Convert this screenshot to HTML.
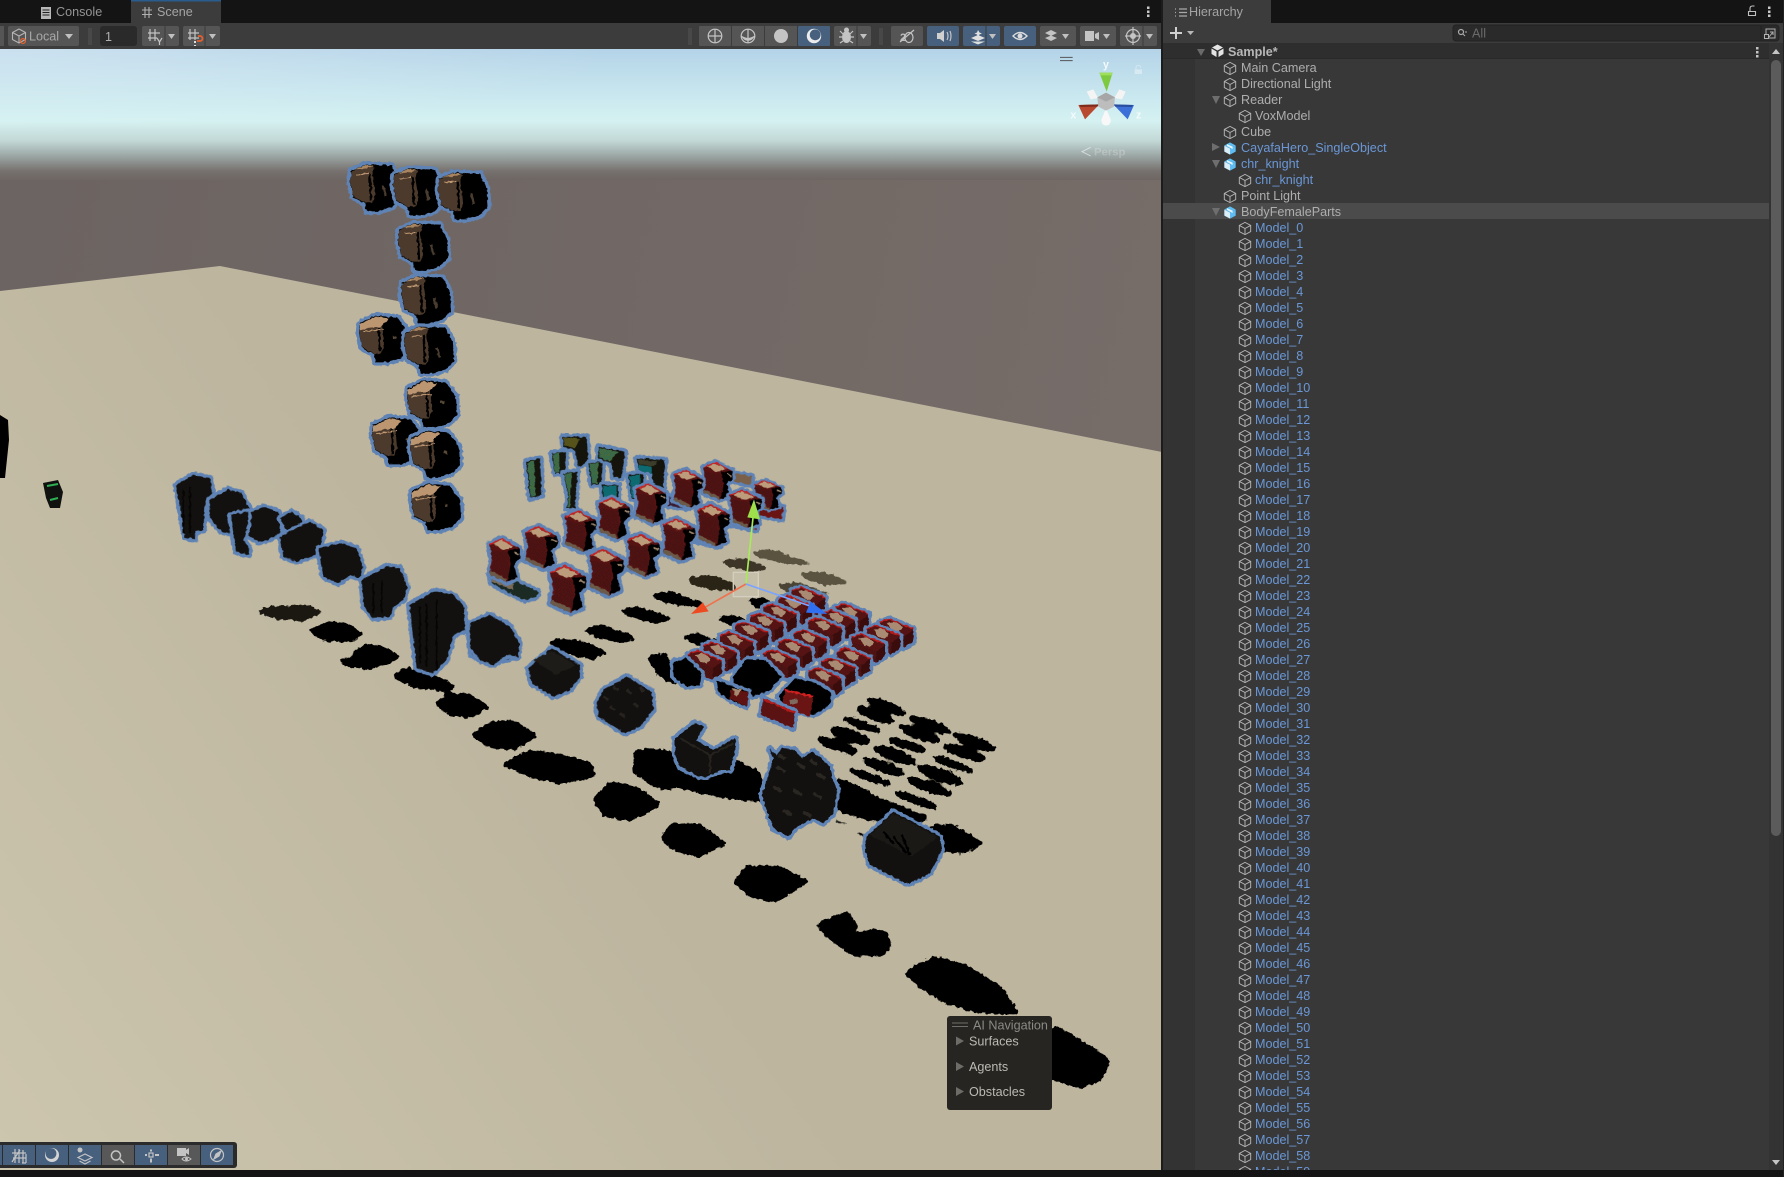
<!DOCTYPE html>
<html><head><meta charset="utf-8"><title>Scene</title>
<style>
html,body{margin:0;padding:0;background:#141414;}
#w{position:relative;width:1784px;height:1177px;overflow:hidden;background:#141414;font-family:"Liberation Sans",sans-serif;}
svg#s{position:absolute;left:0;top:0;}
svg text{font-family:"Liberation Sans",sans-serif;}
#h{position:absolute;left:1163px;top:59px;width:606px;height:1111px;overflow:hidden;font-size:12.6px;color:#aeaeae;background:linear-gradient(90deg,#333 0,#333 32px,#383838 32px);}
#h div{height:16px;line-height:18px;white-space:nowrap;position:relative;}
#h svg{position:absolute;top:2px;width:14px;height:15px;}
.a{padding-left:78px}.a svg{left:60px}
.b{padding-left:92px}.b svg{left:75px}
.m{color:#6b97d6}
.sel{background:#4b4b4b}
.tri{position:absolute;left:49px;top:5px;width:0;height:0;}
.dn{border-left:4.5px solid transparent;border-right:4.5px solid transparent;border-top:8px solid #6e6e6e;}
.rt{border-top:4.5px solid transparent;border-bottom:4.5px solid transparent;border-left:8px solid #6e6e6e;top:4px;}
.o{fill:#13110f;stroke:#5f83b5;stroke-width:20;stroke-linejoin:round;paint-order:stroke;}
.t{fill:#14140c;stroke:#5f83b5;stroke-width:20;stroke-linejoin:round;paint-order:stroke;}
.bk{fill:#000}
.ic{fill:none;stroke:#c4c4c4;stroke-width:1.2}
.if{fill:#c4c4c4}
</style></head><body><div id="w">
<svg id="s" width="1784" height="1177" viewBox="0 0 1784 1177" xmlns="http://www.w3.org/2000/svg">
<defs>
<linearGradient id="sky" x1="0" y1="49" x2="0" y2="180" gradientUnits="userSpaceOnUse">
<stop offset="0" stop-color="#b4d3e8"/><stop offset=".42" stop-color="#cdebf0"/><stop offset=".55" stop-color="#d5f1f1"/><stop offset=".7" stop-color="#c2d8d6"/><stop offset=".82" stop-color="#9aa5a3"/><stop offset=".93" stop-color="#77726f"/><stop offset="1" stop-color="#6e6663"/>
</linearGradient>
<radialGradient id="sk2" cx="0" cy="0" r="1" gradientUnits="userSpaceOnUse" gradientTransform="translate(0,49) scale(620,85)"><stop offset="0" stop-color="#fff" stop-opacity=".3"/><stop offset="1" stop-color="#fff" stop-opacity="0"/></radialGradient>
<linearGradient id="gr" x1="0" y1="200" x2="1162" y2="460" gradientUnits="userSpaceOnUse"><stop offset="0" stop-color="#6c6462"/><stop offset="1" stop-color="#766c68"/></linearGradient>
<linearGradient id="pl" x1="0" y1="1170" x2="560" y2="760" gradientUnits="userSpaceOnUse"><stop offset="0" stop-color="#cdc6ae"/><stop offset="1" stop-color="#bdb59e"/></linearGradient>
<pattern id="chk" width="6" height="6" patternUnits="userSpaceOnUse"><rect width="6" height="6" fill="#0d6a70"/><rect width="3" height="3" fill="#6e6a1c"/><rect x="3" y="3" width="3" height="3" fill="#6e6a1c"/></pattern>
<pattern id="rchk" width="8" height="8" patternUnits="userSpaceOnUse"><rect width="8" height="8" fill="#5a1212"/><rect width="4" height="4" fill="#3f1414"/><rect x="4" y="4" width="4" height="4" fill="#3f1414"/></pattern>
<filter id="blob" filterUnits="userSpaceOnUse" x="0" y="49" width="1162" height="1121" color-interpolation-filters="sRGB">
<feGaussianBlur stdDeviation="2.2" result="b"/>
<feComponentTransfer in="b" result="t"><feFuncA type="linear" slope="9" intercept="-3.6"/></feComponentTransfer>
<feTurbulence type="fractalNoise" baseFrequency=".22" numOctaves="2" seed="4" result="n"/>
<feDisplacementMap in="t" in2="n" scale="5" xChannelSelector="R" yChannelSelector="G"/>
</filter>
<filter id="jag" filterUnits="userSpaceOnUse" x="0" y="49" width="1162" height="1121" color-interpolation-filters="sRGB">
<feTurbulence type="fractalNoise" baseFrequency=".3" numOctaves="1" seed="7" result="n"/>
<feDisplacementMap in="SourceGraphic" in2="n" scale="3.5" xChannelSelector="R" yChannelSelector="G"/>
</filter>
<g id="h1" transform="scale(.3333)">
<polygon class="o" style="fill:#000" points="-72,-52 -30,-70 50,-67 72,-22 75,33 50,58 10,70 -25,70 -30,46 -65,28 -75,-17"/>
<polygon fill="#4c3a2c" points="-72,-50 -30,-66 -2,-64 -8,-40 2,20 -8,44 -30,44 -65,26 -74,-17"/>
<polygon fill="#a8845f" points="-62,-56 -30,-69 -4,-66 -30,-58"/>
<path d="M-16,-44 L-12,38M-2,-46 L4,26" stroke="#000" stroke-width="7" fill="none"/>
<path d="M-55,-40 L-20,-44" stroke="#c29a74" stroke-width="3"/>
<path d="M24,-8 L32,24" stroke="#4a3d30" stroke-width="8"/>
</g>
<g id="h2" transform="scale(.3333)">
<polygon class="o" style="fill:#000" points="-72,-48 -25,-70 40,-65 72,-22 75,33 50,58 10,70 -25,70 -30,46 -65,28 -75,-17"/>
<polygon fill="#4c3a2c" points="-74,-30 -5,-42 0,20 -8,44 -30,44 -65,26 -74,-17"/>
<polygon fill="#bc9670" points="-72,-44 -25,-68 15,-62 -2,-45 -10,-36 -35,-36 -72,-26"/>
<path d="M-16,-34 L-12,38" stroke="#000" stroke-width="7" fill="none"/>
<path d="M-62,-22 L0,-30" stroke="#c29a74" stroke-width="3"/>
<path d="M26,-6 L36,-4" stroke="#5a4a38" stroke-width="8"/>
</g>
<g id="r">
<polygon class="o" style="fill:#571212" points="-50,-45 -10,-62 47,-32 47,-5 28,10 38,50 5,64 -50,40 -42,0"/>
<polygon fill="url(#rchk)" points="-48,-30 8,-22 16,54 -44,30 -36,0"/>
<polygon fill="#000" points="10,-28 47,-32 47,-5 28,10 38,50 8,62 18,10"/>
<polygon fill="#bd9c7c" points="-38,-46 -10,-58 25,-38 -5,-28"/>
<path d="M-48,-44 L-10,-61 L28,-40" stroke="#d02020" stroke-width="4" fill="none"/>
<polygon fill="#6b5a48" points="-50,40 5,64 5,54 -46,30"/>
<path d="M30,-22 L44,-16" stroke="#a08870" stroke-width="5"/>
</g>
<g id="v">
<polygon class="o" style="fill:#561313" points="-50,-28 -22,-38 50,-8 50,30 22,48 -50,20"/>
<polygon fill="url(#rchk)" points="-48,-14 24,14 24,46 -48,18"/>
<polygon fill="#a88b72" points="-30,-26 -5,-30 18,-14 6,0 -12,-4"/>
<path d="M-50,-28 L-22,-38 L50,-8" stroke="#b81c1c" stroke-width="4" fill="none"/>
<polygon fill="#3a0c0c" points="24,14 50,-4 50,30 24,46"/>
</g>
<g id="c"><path fill="none" stroke="#b4b4b4" stroke-width="1.1" d="M8 1 L14.5 4.5 V11.5 L8 15 L1.5 11.5 V4.5 Z M1.5 4.5 L8 8 L14.5 4.5 M8 8 V15"/></g>
<g id="p"><path fill="#d9eefa" d="M1.5 4.5 L8 8 V15 L1.5 11.5 Z"/><path fill="#5fbdf2" d="M8 8 L14.5 4.5 V11.5 L8 15 Z"/><path fill="#5fbdf2" d="M8 1 L14.5 4.5 L8 8 L1.5 4.5 Z"/><path fill="#e8f4fb" d="M4.5 3 L11 6 L11 8.5 L4.5 5 Z"/></g>
</defs>

<!-- scene -->
<rect x="0" y="49" width="1162" height="1121" fill="url(#gr)"/>
<rect x="0" y="49" width="1162" height="131" fill="url(#sky)"/>
<rect x="0" y="49" width="1162" height="90" fill="url(#sk2)"/>
<polygon points="0,291 220,266 1162,452 1162,1170 0,1170" fill="url(#pl)"/>

<!-- far shadows -->
<g filter="url(#blob)">
<g class="bk" transform="translate(160,460) scale(.3333)">
<polygon fill="#1a1810" points="282,452 350,436 440,436 492,455 430,484 350,478"/>
<polygon points="443,510 510,483 570,493 612,525 570,547 490,542"/>
<polygon points="530,600 585,590 575,575 625,550 680,563 724,590 690,612 630,627 560,620"/>
<polygon points="695,650 740,620 800,638 850,658 894,680 860,694 760,684"/>
<polygon points="824,735 860,698 930,703 992,742 930,774 870,767"/>
</g>
<g class="bk">
<polygon points="471,735 490,722 515,720 538,736 515,750 490,748"/>
<polygon points="500,765 530,750 560,754 592,763 596,777 560,784 530,777"/>
<polygon points="592,800 610,781 640,788 662,805 630,821 605,817"/>
<polygon points="815,924 848,911 858,927 850,933 865,931 884,929 892,944 884,956 853,956 829,939"/>
<polygon points="903,973 933,956 967,965 1003,988 1020,1015 978,1013 944,1003 920,988"/>
<polygon points="1017,1050 1030,1035 1057,1026 1097,1050 1110,1060 1102,1080 1080,1089 1050,1079"/>
</g>
<g class="bk" transform="translate(470,420) scale(.3333)">
<polygon points="230,670 270,654 350,666 414,700 370,719 300,704"/>
<polygon points="333,628 400,614 507,655 460,669 380,654"/>
<polygon points="447,570 500,558 614,595 560,612 480,590"/>
<polygon points="537,525 600,514 717,555 660,562 570,545"/>
<polygon fill="#2a2416" points="645,475 720,464 792,490 802,512 720,509 670,495"/>
<polygon fill="#3d3527" points="745,425 820,414 902,445 850,456 780,440"/>
<polygon fill="#5a5340" points="835,395 900,388 1042,435 960,434 870,412"/>
<polygon fill="#4a4434" points="915,495 980,486 1087,525 1010,534 950,515"/>
<polygon fill="#5a5340" points="980,460 1050,454 1147,488 1070,496 1010,478"/>
<polygon points="530,710 590,696 627,800 570,774"/>
<polygon points="632,650 680,638 762,670 700,682"/>
<polygon points="735,595 790,584 862,610 800,624"/>
<polygon points="830,540 880,531 922,560 860,566"/>
</g>
<g class="bk" transform="translate(600,680) scale(.3333)">
<polygon points="105,210 160,205 220,215 225,260 330,290 410,240 480,275 490,365 410,360 350,350 240,325 180,330 100,280"/>
<polygon points="0,340 40,310 120,328 182,375 100,417 20,387"/>
<polygon points="180,475 215,430 300,433 382,490 300,532 220,512"/>
<polygon points="398,605 440,558 540,558 630,605 530,667 450,652"/>
<polygon points="710,290 800,330 830,350 987,410 960,432 860,412 830,427 730,402 700,382"/>
<polygon points="988,435 1060,433 1152,490 1090,522 1020,512"/>
<polygon points="700,418 752,430 745,436 700,428"/>
<polygon points="752,445 800,465 790,474"/>
<g>
<ellipse cx="858" cy="80" rx="66" ry="16" transform="rotate(20 858 80)"/>
<ellipse cx="825" cy="105" rx="64" ry="15" transform="rotate(20 825 105)"/>
<ellipse cx="787" cy="135" rx="64" ry="12" transform="rotate(20 787 135)"/>
<ellipse cx="750" cy="167" rx="66" ry="18" transform="rotate(18 750 167)"/>
<ellipse cx="712" cy="197" rx="66" ry="16" transform="rotate(20 712 197)"/>
<ellipse cx="990" cy="134" rx="68" ry="16" transform="rotate(20 990 134)"/>
<ellipse cx="958" cy="162" rx="68" ry="17" transform="rotate(20 958 162)"/>
<ellipse cx="922" cy="195" rx="66" ry="12" transform="rotate(18 922 195)"/>
<ellipse cx="885" cy="226" rx="70" ry="18" transform="rotate(20 885 226)"/>
<ellipse cx="850" cy="260" rx="70" ry="16" transform="rotate(20 850 260)"/>
<ellipse cx="810" cy="292" rx="70" ry="12" transform="rotate(20 810 292)"/>
<ellipse cx="1123" cy="186" rx="70" ry="17" transform="rotate(20 1123 186)"/>
<ellipse cx="1093" cy="218" rx="70" ry="16" transform="rotate(18 1093 218)"/>
<ellipse cx="1059" cy="253" rx="70" ry="12" transform="rotate(20 1059 253)"/>
<ellipse cx="1020" cy="285" rx="74" ry="19" transform="rotate(20 1020 285)"/>
<ellipse cx="988" cy="320" rx="74" ry="16" transform="rotate(20 988 320)"/>
<ellipse cx="948" cy="360" rx="72" ry="13" transform="rotate(20 948 360)"/>
</g>
</g>
</g>
<polygon class="bk" points="0,415 8,420 9,440 5,478 0,478"/>
<polygon fill="#101210" points="43,483 58,480 63,492 60,508 50,508 46,498"/>
<path d="M47,486 L58,484 M50,500 L58,498" stroke="#2fae55" stroke-width="2"/>

<g filter="url(#jag)">
<!-- heads -->
<use href="#h1" x="375" y="188"/><use href="#h1" x="418" y="192"/><use href="#h1" x="463" y="196"/>
<use href="#h1" x="423" y="247"/><use href="#h1" x="426" y="300"/>
<use href="#h2" x="384" y="339"/><use href="#h1" x="429" y="350"/>
<use href="#h2" x="432" y="404"/><use href="#h2" x="397" y="441"/><use href="#h2" x="435" y="454"/>
<use href="#h2" x="436" y="507"/>

<!-- dark row -->
<g transform="translate(160,460) scale(.3333)">
<polygon class="o" points="48,75 100,45 150,55 158,100 135,130 130,210 105,215 105,238 75,232"/>
<polygon class="o" points="148,120 205,88 245,100 270,150 245,160 212,170 215,220 185,215 150,175"/>
<polygon class="o" points="258,165 310,140 355,155 362,220 320,240 295,245 262,225"/>
<polygon class="o" points="212,165 265,155 262,200 250,240 268,265 265,285 228,275"/>
<polygon class="o" points="360,175 395,155 425,175 425,205 380,210"/>
<polygon class="o" points="360,230 420,200 450,185 490,210 485,245 465,285 435,295 410,305 370,290"/>
<polygon class="o" points="475,265 545,250 590,265 608,320 600,355 570,345 535,370 490,350"/>
<polygon class="o" points="605,360 680,318 720,325 742,380 730,420 700,440 690,470 640,475 612,440"/>
<polygon class="o" points="748,435 825,392 880,405 912,440 915,510 880,525 860,600 820,640 770,625"/>
<polygon class="o" points="925,505 985,465 1040,490 1075,545 1075,590 1030,600 990,612 935,585"/>
<path d="M780,440V610M800,430V620M830,420V630" stroke="#060504" stroke-width="5"/>
<path d="M640,370V460M665,360V460M70,90V220M90,80V220" stroke="#060504" stroke-width="5"/>
</g>

<!-- colored parts -->
<g transform="translate(470,420) scale(.3333)">
<polygon class="t" points="168,125 210,115 215,225 180,235 175,185"/><polygon fill="url(#chk)" points="172,128 192,122 196,228 182,232 178,185"/>
<polygon class="t" points="245,100 288,95 285,160 255,160"/><polygon fill="url(#chk)" points="248,102 268,98 268,158 256,158"/>
<polygon class="t" points="278,50 350,50 355,125 325,140 315,90 280,80"/><polygon fill="#55521c" points="280,52 330,56 315,84 282,76"/>
<polygon class="t" points="280,160 322,155 315,265 290,265 295,230"/><polygon fill="url(#chk)" points="282,162 305,158 300,262 292,262 297,230"/>
<polygon class="t" points="355,130 398,125 395,190 365,195"/><polygon fill="url(#chk)" points="358,132 385,128 382,190 367,192"/>
<polygon class="t" points="385,80 465,95 455,175 430,170 425,130 385,115"/><polygon fill="url(#chk)" points="388,84 445,96 420,125 388,112"/>
<polygon class="t" points="475,165 520,160 520,235 485,235"/><polygon fill="#0d6a70" points="478,168 510,163 510,232 486,232"/>
<polygon class="t" points="395,195 445,195 445,240 400,240"/><polygon fill="#0d6a70" points="398,198 440,197 440,238 402,238"/>
<polygon class="t" points="500,115 585,120 580,205 550,195 545,160 505,150"/><polygon fill="#3d3d2c" points="503,118 565,124 545,140 505,130"/><polygon fill="#0d6a70" points="505,132 545,142 545,160 505,150"/>

<polygon class="o" style="fill:#3a1c30" points="580,225 650,240 650,265 580,255"/>
<polygon class="o" style="fill:#7a6048" points="770,155 845,170 845,195 770,180"/>
<polygon class="o" style="fill:#5a1212" points="670,335 750,350 750,378 670,362"/>
<polygon class="o" style="fill:#8a1616" points="780,290 860,308 860,330 780,312"/>
<polygon class="o" style="fill:#6a1414" points="865,250 940,262 935,298 865,285"/>

<use href="#r" x="745" y="182" transform="translate(745,182) scale(.9) translate(-745,-182)"/>
<use href="#r" x="895" y="225" transform="translate(895,225) scale(.85,.7) translate(-895,-225)"/>
<use href="#r" x="655" y="205" transform="translate(655,205) scale(.9) translate(-655,-205)"/>
<use href="#r" x="828" y="266" transform="translate(828,266) scale(1,.9) translate(-828,-266)"/>
<use href="#r" x="544" y="250" transform="translate(544,250) scale(.95) translate(-544,-250)"/>
<use href="#r" x="434" y="294" transform="translate(434,294) scale(.98,.98) translate(-434,-294)"/>
<use href="#r" x="732" y="315"/>
<use href="#r" x="629" y="358"/>
<use href="#r" x="333" y="333" transform="translate(333,333) scale(.97,.98) translate(-333,-333)"/>
<use href="#r" x="522" y="405"/>
<use href="#r" x="215" y="381"/>
<use href="#r" x="411" y="456" transform="translate(411,456) scale(1.05,1.1) translate(-411,-456)"/>
<polygon class="o" style="fill:#1c2a24" points="60,450 120,470 150,490 205,515 200,530 165,540 120,520 65,490"/>
<polygon fill="#7b6a55" points="60,450 125,470 130,510 65,485"/>
<use href="#r" x="105" y="420" transform="translate(105,420) scale(.95,1.05) translate(-105,-420)"/>
<use href="#r" x="296" y="506" transform="translate(296,506) scale(1.1,1.12) translate(-296,-506)"/>

<polygon class="o" points="0,610 60,585 120,620 148,670 145,710 110,705 70,735 30,720 0,680"/>
<polygon class="o" points="175,745 245,685 330,735 330,770 300,810 250,830 185,790"/>
<polygon fill="#1e1c19" points="190,720 245,692 318,735 258,765"/>
<polygon class="o" points="380,850 400,810 470,770 545,815 550,870 510,920 465,940 385,890"/>
<path d="M400,830l15,10M430,800l15,10M470,810l15,10M420,860l15,10M490,850l15,10M450,880l15,10M510,800l10,15" stroke="#262320" stroke-width="8"/>

<use href="#v" x="1015" y="540"/><use href="#v" x="975" y="565"/><use href="#v" x="930" y="590"/><use href="#v" x="1145" y="590"/><use href="#v" x="1105" y="608"/><use href="#v" x="1280" y="635"/>
<use href="#v" x="890" y="618"/><use href="#v" x="1065" y="632"/><use href="#v" x="845" y="645"/><use href="#v" x="1240" y="655"/><use href="#v" x="1020" y="668"/><use href="#v" x="800" y="675"/><use href="#v" x="1195" y="680"/><use href="#v" x="975" y="695"/><use href="#v" x="750" y="705"/><use href="#v" x="1150" y="722"/><use href="#v" x="930" y="728"/><use href="#v" x="705" y="730"/><use href="#v" x="1105" y="752"/><use href="#v" x="1065" y="782"/>

<polygon class="o" style="fill:#000" points="610,725 650,715 695,760 690,795 650,800 610,770"/>
<polygon class="o" style="fill:#000" points="790,770 830,718 885,720 935,770 900,810 850,830 790,800"/>
<polygon class="o" style="fill:#000" points="740,780 790,800 835,815 830,860 780,840 745,815"/>
<polygon fill="#5f1212" points="780,810 835,815 832,860 780,838"/><polygon fill="#a58a70" points="785,805 815,808 800,830"/>
<polygon class="o" style="fill:#000" points="925,830 975,775 1040,790 1085,820 1080,855 1030,885 960,870"/>
<polygon fill="#6a1414" points="945,810 1030,830 1020,890 935,860"/><path d="M945,810 L1030,830" stroke="#d02020" stroke-width="6"/><rect x="960" y="838" width="22" height="14" fill="#806a60"/>
<polygon class="o" style="fill:#5a1212" points="880,835 975,875 970,925 872,885"/>
<path d="M880,838 L975,878" stroke="#b41a1a" stroke-width="6"/>
</g>

<!-- Bracket spiky cube -->
<g transform="translate(600,680) scale(.3333)">
<polygon class="o" points="225,175 285,128 312,140 300,160 290,180 340,210 405,175 408,205 390,270 365,270 320,290 300,290 240,260 225,225"/>
<path d="M240,175 L330,225 M330,225 L400,190 M330,225 V280" stroke="#26231f" stroke-width="6" fill="none"/>
<polygon class="o" points="508,205 530,225 545,205 585,210 605,235 640,215 690,260 695,290 712,330 700,400 670,430 640,415 590,440 565,470 520,445 500,390 485,345 510,270 520,235"/>
<path d="M530,260l25,15M590,250l25,15M650,280l25,15M520,320l25,15M580,330l25,15M640,340l25,15M550,390l25,15M610,395l25,15M535,225l20,12M630,240l20,12" stroke="#2a2723" stroke-width="10"/>
<polygon class="o" points="800,470 880,395 1020,470 1025,510 990,580 925,612 810,555 795,510"/>
<polygon fill="#1b1916" points="810,465 880,400 1012,472 935,530"/>
<path d="M850,455l30,35M880,470l40,50M905,465l25,60" stroke="#000" stroke-width="7"/>
</g>
</g>

<!-- Move gizmo -->
<g transform="translate(470,420) scale(.3333)">
<rect x="790" y="457" width="75" height="73" fill="rgba(255,255,255,.12)" stroke="#d4cfc0" stroke-width="4"/>
<path d="M828,492 L850,285" stroke="#a6ec58" stroke-width="5"/>
<polygon fill="#9de04c" points="852,238 832,292 870,298"/>
<path d="M828,492 L705,562" stroke="#f0714e" stroke-width="5"/>
<polygon fill="#ee4a22" points="663,582 698,547 716,574"/>
<path d="M828,492 L1020,558" stroke="#7aa4ff" stroke-width="5"/>
<polygon fill="#2f6ff0" points="1072,582 1022,545 1008,578"/>
</g>

<!-- orientation gizmo -->
<g transform="translate(1060,40) scale(.3333)">
<path d="M0,52H38M0,62H38" stroke="#555" stroke-width="3"/>
<polygon fill="#f4f4f4" points="80,155 100,148 114,174 92,178"/><polygon fill="#f4f4f4" points="163,174 178,148 197,155 186,178"/>
<path d="M124,240 L138,206 L153,240 Q150,258 138,256 Q126,258 124,240Z" fill="#f8f8f8"/>
<polygon fill="#7dc93f" points="118,98 158,98 140,155"/><polygon fill="#a0de5e" points="118,98 158,98 155,106 121,106"/>
<polygon fill="#b8482f" points="55,195 118,193 75,238"/><polygon fill="#7e2c1e" points="58,195 118,193 112,200 62,201"/>
<polygon fill="#3d6fd8" points="160,193 222,195 203,238"/><polygon fill="#2a4c9c" points="160,193 220,195 215,201 166,200"/>
<polygon fill="#bdbdbd" points="138,158 165,172 162,200 138,212 115,200 112,172"/><polygon fill="#a6a6a6" points="138,158 165,172 138,185 112,172"/>
<text x="138" y="84" font-size="32" font-weight="bold" fill="#f2fafc" text-anchor="middle">y</text>
<text x="40" y="236" font-size="32" font-weight="bold" fill="#f2fafc" text-anchor="middle">x</text>
<text x="236" y="236" font-size="32" font-weight="bold" fill="#f2fafc" text-anchor="middle">z</text>
<path d="M92,322 L66,335 L92,348" stroke="rgba(255,255,255,.55)" stroke-width="3" fill="none"/>
<text x="102" y="346" font-size="34" font-weight="bold" fill="rgba(255,255,255,.22)">Persp</text>
<rect x="224" y="88" width="22" height="14" fill="rgba(255,255,255,.38)"/><path d="M228,88 v-5 a7,7 0 0 1 14,0" stroke="rgba(255,255,255,.38)" stroke-width="3" fill="none"/>
</g>

<!-- AI nav panel -->
<rect x="947" y="1016" width="105" height="94" rx="3" fill="#262521"/>
<path d="M952 1023h16M952 1026.5h16" stroke="#6e6d68" stroke-width="1"/>
<text x="973" y="1029.5" font-size="12.6" fill="#8b8a85">AI Navigation</text>
<path d="M956 1036.5l8 4.5-8 4.5zM956 1062l8 4.5-8 4.5zM956 1087l8 4.5-8 4.5z" fill="#6d6c67"/>
<text x="969" y="1045.5" font-size="12.6" fill="#bcbab2">Surfaces</text>
<text x="969" y="1071" font-size="12.6" fill="#bcbab2">Agents</text>
<text x="969" y="1096" font-size="12.6" fill="#bcbab2">Obstacles</text>

<!-- bottom overlay toolbar -->
<rect x="-6" y="1142" width="243" height="26" rx="3" fill="#2b2b2b"/>
<rect x="0" y="1145" width="2" height="20" fill="#46607e"/>
<g fill="#46607e"><rect x="3" y="1145" width="32" height="20"/><rect x="36" y="1145" width="32" height="20"/><rect x="69" y="1145" width="32" height="20"/><rect x="135" y="1145" width="32" height="20"/><rect x="201" y="1145" width="32" height="20"/></g>
<g fill="#585858"><rect x="102" y="1145" width="32" height="20"/><rect x="168" y="1145" width="32" height="20"/></g>
<g class="ic" stroke-width="1.3">
<path d="M15 1149v14M19 1149v14M23 1150v13M12 1153h14M13 1158h13M26 1154v9M12 1162l8-12M22 1163h4"/>
<path d="M85 1154l-7 3.5 7 3.5 7-3.5zM79.500 1161l5.500 3 5.500-3"/>
<path d="M116 1151a4.500 4.500 0 1 1 -.1 0zM120 1159l4 4" stroke-width="1.5"/>
<rect x="149" y="1153" width="4" height="4"/>
<path d="M151 1149.500v2M151 1158.500v4M145 1155h2M155 1155h4" stroke-width="2"/>
<circle cx="217" cy="1155" r="6.500"/>
<path d="M214 1159l2-5 5-3-2 5z" style="fill:#c4c4c4"/>
</g>
<circle cx="52" cy="1155" r="7" fill="#d4d4d4"/><circle cx="51" cy="1153.500" r="5.400" fill="#46607e"/>
<circle cx="80" cy="1150" r="2.500" fill="#c4c4c4"/>
<path d="M177 1148h9v8h-9zM186 1150l3-2v7l-3-2z" fill="#c4c4c4"/>
<path d="M182 1159q4-4 9 0q-5 4-9 0z" stroke="#c4c4c4" fill="none"/><circle cx="186.500" cy="1159" r="1.500" fill="#c4c4c4"/>

<!-- top bars -->
<rect x="0" y="0" width="1784" height="23" fill="#141414"/>
<rect x="131" y="0" width="90" height="23" fill="#3c3c3c"/>
<rect x="131" y="0" width="90" height="1.500" fill="#2a5d8e"/>
<rect x="1163" y="0" width="108" height="23" fill="#3c3c3c"/>
<rect x="0" y="23" width="1161" height="26" fill="#3c3c3c"/>
<rect x="1163" y="23" width="621" height="20" fill="#3c3c3c"/>
<rect x="1161" y="0" width="2" height="1177" fill="#1c1c1c"/>
<rect x="0" y="1170" width="1784" height="7" fill="#141414"/>

<!-- tab labels -->
<path d="M41 7h10v12H41z" fill="#b8b8b8"/><path d="M42.500 10h7M42.500 12.500h7M42.500 15h7" stroke="#222" stroke-width="1"/>
<text x="56" y="16" font-size="12.6" fill="#949494">Console</text>
<path d="M145 7v11M149 7v11M142 10h10M142 14.500h10" stroke="#b0b0b0" stroke-width="1.100" fill="none"/>
<text x="157" y="16" font-size="12.6" fill="#a4a4a4">Scene</text>
<path d="M1175 9h1M1175 12.500h1M1175 16h1M1179 9h8M1179 12.500h8M1179 16h8" stroke="#a8a8a8" stroke-width="1.200"/>
<text x="1189" y="16" font-size="12.6" fill="#a4a4a4">Hierarchy</text>
<g fill="#c8c8c8"><rect x="1147" y="6.500" width="2.500" height="2.500"/><rect x="1147" y="10.500" width="2.500" height="2.500"/><rect x="1147" y="14.500" width="2.500" height="2.500"/><rect x="1768" y="6.500" width="2.500" height="2.500"/><rect x="1768" y="10.500" width="2.500" height="2.500"/><rect x="1768" y="14.500" width="2.500" height="2.500"/></g>
<path d="M1748.500 11.500h7v4h-7zM1750 11v-2.500q0-2.500 2.500-2.500h2" fill="none" stroke="#c0c0c0" stroke-width="1.100"/>

<!-- toolbar buttons -->
<g fill="#555"><rect x="0" y="26" width="4" height="20"/>
<rect x="8" y="26" width="71" height="20" rx="2"/>
<rect x="142" y="26" width="37" height="20" rx="2"/><rect x="183" y="26" width="37" height="20" rx="2"/>
<rect x="699" y="26" width="32" height="20" rx="1"/><rect x="732" y="26" width="32" height="20"/><rect x="765" y="26" width="32" height="20"/>
<rect x="834" y="26" width="37" height="20" rx="2"/><rect x="891" y="26" width="32" height="20" rx="2"/>
<rect x="1040" y="26" width="36" height="20" rx="2"/><rect x="1080" y="26" width="36" height="20" rx="2"/><rect x="1120" y="26" width="37" height="20" rx="2"/></g>
<g fill="#46607e"><rect x="798" y="26" width="32" height="20" rx="1"/><rect x="927" y="26" width="32" height="20" rx="2"/><rect x="963" y="26" width="37" height="20" rx="2"/><rect x="1004" y="26" width="32" height="20" rx="2"/></g>
<path d="M165 26v20M205 26v20M857 26v20M986 26v20M1143 26v20" stroke="#3c3c3c" stroke-width="1"/>
<path d="M89 28v17M91 28v17M689 28v17M691 28v17M880 28v17M882 28v17" stroke="#555" stroke-width="1"/>
<rect x="100" y="26" width="37" height="20" rx="3" fill="#2a2a2a"/>
<text x="105" y="41" font-size="12.6" fill="#b0b0b0">1</text>
<g transform="translate(11,28)"><path fill="none" stroke="#b4b4b4" stroke-width="1.100" d="M8 1 L14.500 4.500 V11.500 L8 15 L1.500 11.500 V4.500 Z M1.500 4.500 L8 8 L14.500 4.500 M8 8 V15"/></g>
<circle cx="23" cy="41" r="2.400" fill="none" stroke="#e8602c" stroke-width="1.300"/>
<text x="29" y="40.500" font-size="12.6" fill="#a8a8a8">Local</text>
<g fill="#c0c0c0"><path d="M65 34h8l-4 5zM168 34h7l-3.500 5zM209 34h7l-3.500 5zM860 34h7l-3.500 5zM989 34h7l-3.500 5zM1062 34h7l-3.500 5zM1103 34h7l-3.500 5zM1146 34h7l-3.500 5z"/></g>
<path d="M150 29v12M155 29v12M148 33h12M148 38h9" class="ic"/>
<path d="M157 38l2.500 4 2.500-4M159.500 42v3" class="ic"/>
<path d="M190 29v11M195 29v11M188 33h11M188 38h11" class="ic"/>
<path d="M197 41h3a2.500 2.500 0 0 0 0-5h-2" fill="none" stroke="#e8602c" stroke-width="1.800"/>
<g fill="#ddd"><rect x="194" y="41" width="2" height="2"/><rect x="194" y="45" width="2" height="1"/></g>
<g class="ic"><circle cx="715" cy="36" r="6.800"/><path d="M708 36h14M715 29v14"/>
<circle cx="748" cy="36" r="6.800"/><path d="M741 36q7 5 14 0M748 29v14"/></g>
<path d="M741.500 36a6.800 6.800 0 0 0 13 0q-7 5-13 0z" fill="#c4c4c4"/>
<circle cx="781" cy="36" r="7" fill="#c4c4c4"/>
<circle cx="814" cy="36" r="7.200" fill="#ececec"/><circle cx="815.200" cy="34.800" r="5.400" fill="#46607e"/>
<ellipse cx="846.500" cy="37" rx="4.500" ry="6" fill="#c4c4c4"/><path d="M840 31l3 3M853 31l-3 3M839 37h3M854 37h-3M840 43l3-2M853 43l-3-2" stroke="#c4c4c4" stroke-width="1.200"/><circle cx="846.500" cy="30" r="2.500" fill="#c4c4c4"/>
<text x="900" y="41" font-size="11" font-weight="bold" fill="#bdbdbd">2</text><path d="M900 42l14-12" class="ic"/><path d="M909 32.500a4 5 0 1 1 -.1 0z" class="ic"/>
<path d="M937 33h3l4-3v12l-4-3h-3z" fill="#d0d0d0"/><path d="M947 32q2 4 0 8M950 31q2 5 0 10" class="ic"/>
<path d="M971 38l7-3 7 3-7 3zM971 41.500l7 3 7-3" fill="#e0e0e0"/><path d="M978 30l1.500 2.500 2.500 1-2.500 1-1.500 2.500-1-2.500-2.500-1 2.500-1z" fill="#e0e0e0"/>
<path d="M1013 36q7-7 14 0q-7 7-14 0z" fill="none" stroke="#dcdcdc" stroke-width="1.400"/><circle cx="1020" cy="36" r="2.500" fill="#dcdcdc"/>
<path d="M1045 33l6-3 6 3-6 3zM1045 38l6-2.500 6 2.500-6 3z" fill="#c4c4c4"/>
<path d="M1085 31h9v10h-9zM1095 34l4-2v8l-4-2z" fill="#c4c4c4"/>
<circle cx="1133" cy="36" r="6.500" class="ic"/><circle cx="1133" cy="36" r="3" class="if"/><path d="M1133 27v18M1125 36h16" class="ic"/>

<!-- hierarchy toolbar -->
<path d="M1170 33h12M1176 27v12" stroke="#d0d0d0" stroke-width="2"/>
<path d="M1187 31h7l-3.500 4z" fill="#b8b8b8"/>
<rect x="1453" y="25" width="326" height="16" rx="3" fill="#2a2a2a" stroke="#222"/>
<path d="M1761 26v14" stroke="#202020"/>
<circle cx="1461" cy="32" r="2.500" fill="none" stroke="#aaa" stroke-width="1.200"/><path d="M1463 34l2 2M1465 32h2" stroke="#aaa"/>
<text x="1472" y="37.500" font-size="12.6" fill="#6a6a6a">All</text>
<path d="M1766 29h9v9h-9z" fill="none" stroke="#b0b0b0"/><path d="M1769 37l4-5M1770 32h3v3" stroke="#b0b0b0" fill="none"/><rect x="1764.500" y="34.500" width="4" height="4" fill="#2a2a2a" stroke="#b0b0b0"/>

<!-- Sample row -->
<rect x="1163" y="43" width="606" height="16" fill="#2e2e2e"/>
<path d="M1163 59h606" stroke="#242424"/>
<path d="M1197 49h8l-4 7z" fill="#6a6a6a"/>
<g fill="#e4e4e4"><path d="M1217.500 44.500l5.500 3-5.500 3-5.500-3z"/><path d="M1211.500 48.500l5 3v5.500l-5-3z"/><path d="M1223.500 48.500v5.500l-5 3v-5.500z"/></g>
<text x="1228" y="56" font-size="12.6" font-weight="bold" fill="#b8b8b8">Sample*</text>
<g fill="#c4c4c4"><rect x="1756" y="47" width="2.500" height="2.500"/><rect x="1756" y="51" width="2.500" height="2.500"/><rect x="1756" y="55" width="2.500" height="2.500"/></g>

<!-- scrollbar -->
<rect x="1769" y="43" width="15" height="1127" fill="#333"/>
<rect x="1783" y="0" width="1" height="1177" fill="#222"/>
<rect x="1771" y="60" width="10" height="776" rx="5" fill="#5b5b5b"/>
<path d="M1772 54h8l-4-5z" fill="#c4c4c4"/>
<path d="M1772 1160h8l-4 5z" fill="#c4c4c4"/>
</svg>

<div id="h">
<div class="a"><svg viewBox="0 0 16 16"><use href="#c"/></svg>Main Camera</div>
<div class="a"><svg viewBox="0 0 16 16"><use href="#c"/></svg>Directional Light</div>
<div class="a"><i class="tri dn"></i><svg viewBox="0 0 16 16"><use href="#c"/></svg>Reader</div>
<div class="b"><svg viewBox="0 0 16 16"><use href="#c"/></svg>VoxModel</div>
<div class="a"><svg viewBox="0 0 16 16"><use href="#c"/></svg>Cube</div>
<div class="a m"><i class="tri rt"></i><svg viewBox="0 0 16 16"><use href="#p"/></svg>CayafaHero_SingleObject</div>
<div class="a m"><i class="tri dn"></i><svg viewBox="0 0 16 16"><use href="#p"/></svg>chr_knight</div>
<div class="b m"><svg viewBox="0 0 16 16"><use href="#c"/></svg>chr_knight</div>
<div class="a"><svg viewBox="0 0 16 16"><use href="#c"/></svg>Point Light</div>
<div class="a sel"><i class="tri dn"></i><svg viewBox="0 0 16 16"><use href="#p"/></svg>BodyFemaleParts</div>
<div class="b m"><svg viewBox="0 0 16 16"><use href="#c"/></svg>Model_0</div>
<div class="b m"><svg viewBox="0 0 16 16"><use href="#c"/></svg>Model_1</div>
<div class="b m"><svg viewBox="0 0 16 16"><use href="#c"/></svg>Model_2</div>
<div class="b m"><svg viewBox="0 0 16 16"><use href="#c"/></svg>Model_3</div>
<div class="b m"><svg viewBox="0 0 16 16"><use href="#c"/></svg>Model_4</div>
<div class="b m"><svg viewBox="0 0 16 16"><use href="#c"/></svg>Model_5</div>
<div class="b m"><svg viewBox="0 0 16 16"><use href="#c"/></svg>Model_6</div>
<div class="b m"><svg viewBox="0 0 16 16"><use href="#c"/></svg>Model_7</div>
<div class="b m"><svg viewBox="0 0 16 16"><use href="#c"/></svg>Model_8</div>
<div class="b m"><svg viewBox="0 0 16 16"><use href="#c"/></svg>Model_9</div>
<div class="b m"><svg viewBox="0 0 16 16"><use href="#c"/></svg>Model_10</div>
<div class="b m"><svg viewBox="0 0 16 16"><use href="#c"/></svg>Model_11</div>
<div class="b m"><svg viewBox="0 0 16 16"><use href="#c"/></svg>Model_12</div>
<div class="b m"><svg viewBox="0 0 16 16"><use href="#c"/></svg>Model_13</div>
<div class="b m"><svg viewBox="0 0 16 16"><use href="#c"/></svg>Model_14</div>
<div class="b m"><svg viewBox="0 0 16 16"><use href="#c"/></svg>Model_15</div>
<div class="b m"><svg viewBox="0 0 16 16"><use href="#c"/></svg>Model_16</div>
<div class="b m"><svg viewBox="0 0 16 16"><use href="#c"/></svg>Model_17</div>
<div class="b m"><svg viewBox="0 0 16 16"><use href="#c"/></svg>Model_18</div>
<div class="b m"><svg viewBox="0 0 16 16"><use href="#c"/></svg>Model_19</div>
<div class="b m"><svg viewBox="0 0 16 16"><use href="#c"/></svg>Model_20</div>
<div class="b m"><svg viewBox="0 0 16 16"><use href="#c"/></svg>Model_21</div>
<div class="b m"><svg viewBox="0 0 16 16"><use href="#c"/></svg>Model_22</div>
<div class="b m"><svg viewBox="0 0 16 16"><use href="#c"/></svg>Model_23</div>
<div class="b m"><svg viewBox="0 0 16 16"><use href="#c"/></svg>Model_24</div>
<div class="b m"><svg viewBox="0 0 16 16"><use href="#c"/></svg>Model_25</div>
<div class="b m"><svg viewBox="0 0 16 16"><use href="#c"/></svg>Model_26</div>
<div class="b m"><svg viewBox="0 0 16 16"><use href="#c"/></svg>Model_27</div>
<div class="b m"><svg viewBox="0 0 16 16"><use href="#c"/></svg>Model_28</div>
<div class="b m"><svg viewBox="0 0 16 16"><use href="#c"/></svg>Model_29</div>
<div class="b m"><svg viewBox="0 0 16 16"><use href="#c"/></svg>Model_30</div>
<div class="b m"><svg viewBox="0 0 16 16"><use href="#c"/></svg>Model_31</div>
<div class="b m"><svg viewBox="0 0 16 16"><use href="#c"/></svg>Model_32</div>
<div class="b m"><svg viewBox="0 0 16 16"><use href="#c"/></svg>Model_33</div>
<div class="b m"><svg viewBox="0 0 16 16"><use href="#c"/></svg>Model_34</div>
<div class="b m"><svg viewBox="0 0 16 16"><use href="#c"/></svg>Model_35</div>
<div class="b m"><svg viewBox="0 0 16 16"><use href="#c"/></svg>Model_36</div>
<div class="b m"><svg viewBox="0 0 16 16"><use href="#c"/></svg>Model_37</div>
<div class="b m"><svg viewBox="0 0 16 16"><use href="#c"/></svg>Model_38</div>
<div class="b m"><svg viewBox="0 0 16 16"><use href="#c"/></svg>Model_39</div>
<div class="b m"><svg viewBox="0 0 16 16"><use href="#c"/></svg>Model_40</div>
<div class="b m"><svg viewBox="0 0 16 16"><use href="#c"/></svg>Model_41</div>
<div class="b m"><svg viewBox="0 0 16 16"><use href="#c"/></svg>Model_42</div>
<div class="b m"><svg viewBox="0 0 16 16"><use href="#c"/></svg>Model_43</div>
<div class="b m"><svg viewBox="0 0 16 16"><use href="#c"/></svg>Model_44</div>
<div class="b m"><svg viewBox="0 0 16 16"><use href="#c"/></svg>Model_45</div>
<div class="b m"><svg viewBox="0 0 16 16"><use href="#c"/></svg>Model_46</div>
<div class="b m"><svg viewBox="0 0 16 16"><use href="#c"/></svg>Model_47</div>
<div class="b m"><svg viewBox="0 0 16 16"><use href="#c"/></svg>Model_48</div>
<div class="b m"><svg viewBox="0 0 16 16"><use href="#c"/></svg>Model_49</div>
<div class="b m"><svg viewBox="0 0 16 16"><use href="#c"/></svg>Model_50</div>
<div class="b m"><svg viewBox="0 0 16 16"><use href="#c"/></svg>Model_51</div>
<div class="b m"><svg viewBox="0 0 16 16"><use href="#c"/></svg>Model_52</div>
<div class="b m"><svg viewBox="0 0 16 16"><use href="#c"/></svg>Model_53</div>
<div class="b m"><svg viewBox="0 0 16 16"><use href="#c"/></svg>Model_54</div>
<div class="b m"><svg viewBox="0 0 16 16"><use href="#c"/></svg>Model_55</div>
<div class="b m"><svg viewBox="0 0 16 16"><use href="#c"/></svg>Model_56</div>
<div class="b m"><svg viewBox="0 0 16 16"><use href="#c"/></svg>Model_57</div>
<div class="b m"><svg viewBox="0 0 16 16"><use href="#c"/></svg>Model_58</div>
<div class="b m"><svg viewBox="0 0 16 16"><use href="#c"/></svg>Model_59</div>
</div>
</div></body></html>
